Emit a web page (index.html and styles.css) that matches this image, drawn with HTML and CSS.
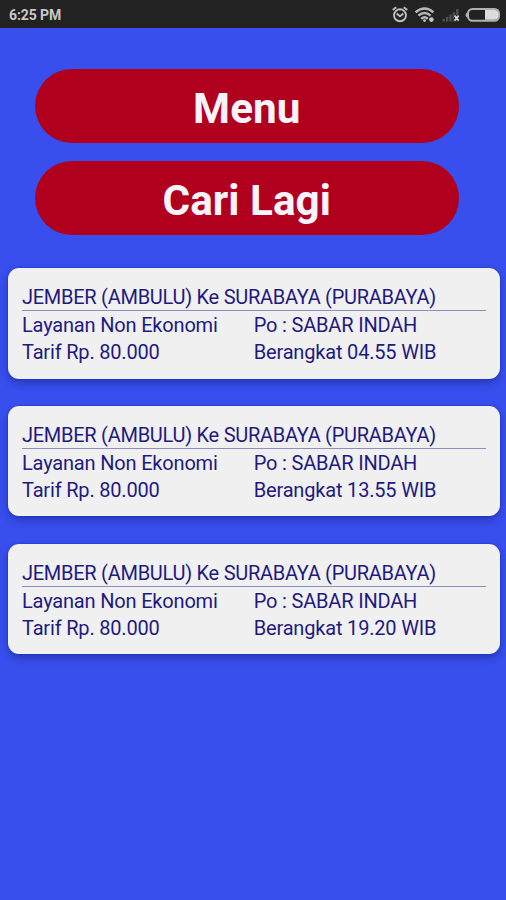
FILE: index.html
```html
<!DOCTYPE html>
<html lang="id">
<head>
  <meta charset="UTF-8">
  <meta name="viewport" content="width=device-width, initial-scale=1.0">
  <title>Jadwal Bus</title>
  <link rel="stylesheet" href="styles.css">
</head>
<body>
  <!-- Status bar -->
  <header class="status-bar">
    <span class="clock">6:25 PM</span>
    <svg class="icon-alarm" width="16" height="18" viewBox="0 0 16 18" fill="none" stroke="#bebebe" stroke-width="1.9">
      <circle cx="8" cy="9.3" r="6"/>
      <path d="M.8 4L4.2 1.2M15.2 4L11.8 1.2M4.6 7.4L8 10.2L11.4 7.4"/>
    </svg>
    <svg class="icon-wifi" width="20" height="16" viewBox="0 0 20 16" fill="none" stroke="#b8b8b8" stroke-width="2.4">
      <path d="M.6 5.4Q9.5 -2.2 18.4 5.4"/>
      <path d="M3.4 8.7Q9.5 3.1 15.6 8.7"/>
      <path d="M6.2 11.8Q9.5 8.6 12.8 11.8"/>
      <circle cx="9.5" cy="13.6" r="1.4" fill="#c6c6c6" stroke="none"/>
      <circle cx="16.4" cy="12.6" r="2.3" fill="#c6c6c6" stroke="none"/>
    </svg>
    <svg class="icon-signal" width="18" height="14" viewBox="0 0 18 14">
      <path fill="#505050" d="M.5 11h2.4v2.5H.5zM3.9 9h2.4v4.5H3.9zM7.3 6.5h2.4v7H7.3zM10.7 4h2.4v9.5h-2.4zM14.1 1h2.4v12.5h-2.4z"/>
      <path d="M12.6 7.6l4 5M16.6 7.6l-4 5" stroke="#222" stroke-width="3.4"/>
      <path d="M12.6 7.6l4 5M16.6 7.6l-4 5" stroke="#d0d0d0" stroke-width="1.8"/>
    </svg>
    <svg class="icon-battery" width="36" height="14" viewBox="0 0 36 14">
      <rect x="3" y="1" width="31" height="11.8" rx="4.5" fill="#222" stroke="#b0b0b0" stroke-width="2"/>
      <path d="M20 2h9.5a3.8 3.8 0 0 1 3.8 3.8V8a3.8 3.8 0 0 1-3.8 3.8H20z" fill="#dcdcdc"/>
      <path d="M2.4 4Q-1.4 7 2.4 10z" fill="#b0b0b0"/>
    </svg>
  </header>

  <div class="buttons">
    <button class="btn">Menu</button>
    <button class="btn">Cari Lagi</button>
  </div>

  <!-- Schedule list -->
  <main class="schedule">
    <div class="card">
      <h3 class="route">JEMBER (AMBULU) Ke SURABAYA (PURABAYA)</h3>
      <div class="details">
        <span>Layanan Non Ekonomi</span>
        <span>Po : SABAR INDAH</span>
        <span>Tarif Rp. 80.000</span>
        <span>Berangkat 04.55 WIB</span>
      </div>
    </div>
    <div class="card">
      <h3 class="route">JEMBER (AMBULU) Ke SURABAYA (PURABAYA)</h3>
      <div class="details">
        <span>Layanan Non Ekonomi</span>
        <span>Po : SABAR INDAH</span>
        <span>Tarif Rp. 80.000</span>
        <span>Berangkat 13.55 WIB</span>
      </div>
    </div>
    <div class="card">
      <h3 class="route">JEMBER (AMBULU) Ke SURABAYA (PURABAYA)</h3>
      <div class="details">
        <span>Layanan Non Ekonomi</span>
        <span>Po : SABAR INDAH</span>
        <span>Tarif Rp. 80.000</span>
        <span>Berangkat 19.20 WIB</span>
      </div>
    </div>
  </main>
</body>
</html>
```
FILE: styles.css
```css
* {
  margin: 0;
  padding: 0;
  box-sizing: border-box;
  font-family: Roboto, 'Liberation Sans', sans-serif;
}

body {
  background: #384fee;
  color: #1f1a80;
  min-height: 100vh;
}

/* Status bar */
.status-bar {
  display: flex;
  align-items: center;
  height: 28px;
  padding: 1px 5px 0 9px;
  background: #222;
}

.clock {
  margin-right: auto;
  font-size: 14px;
  font-weight: 700;
  letter-spacing: -0.1px;
  color: #c8c8c8;
}

.icon-wifi {
  margin-left: 7px;
}

.icon-signal {
  margin-left: 7px;
}

.icon-battery {
  margin-left: 5px;
}

/* Buttons */
.buttons {
  display: flex;
  flex-direction: column;
  gap: 18px;
  padding: 41px 47px 0 34.5px;
}

.btn {
  height: 74px;
  border: none;
  border-radius: 37px;
  background: #b0001e;
  color: #f6f3fb;
  font-size: 42.3px;
  font-weight: 700;
  line-height: 70px;
  padding-top: 5px;
  cursor: pointer;
}

/* Schedule cards */
.schedule {
  display: flex;
  flex-direction: column;
  gap: 27.3px;
  padding: 33px 6px 0 7.5px;
}

.card {
  height: 110.5px;
  padding: 16px 14.5px;
  background: #f0f0f0;
  border-radius: 11px;
  box-shadow: 0 0 2px #1230c8, 0 4px 8px rgba(20, 30, 110, 0.45);
}

.route {
  height: 27px;
  border-bottom: 1.5px solid #8f8cc0;
  font-size: 20px;
  font-weight: 400;
  line-height: 27px;
  letter-spacing: -0.27px;
  white-space: nowrap;
}

.details {
  display: grid;
  grid-template-columns: 1fr 1fr;
  padding-top: 1px;
  font-size: 20px;
  line-height: 27px;
  letter-spacing: -0.18px;
  white-space: nowrap;
}
```
